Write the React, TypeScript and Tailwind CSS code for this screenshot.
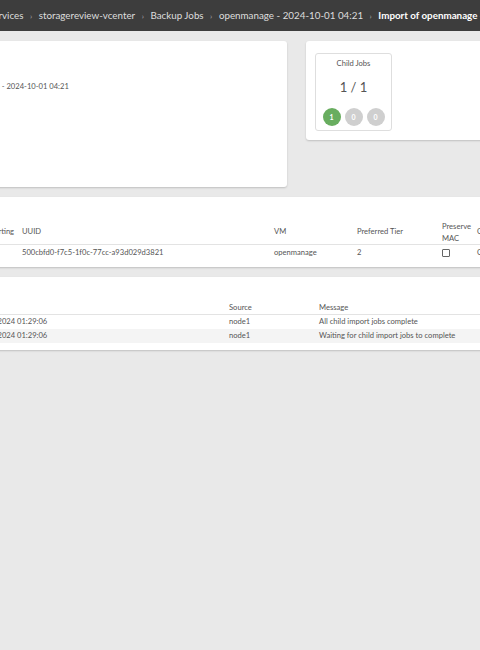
import React from 'react'

const crumbs = ['Services', 'storagereview-vcenter', 'Backup Jobs', 'openmanage - 2024-10-01 04:21']

const events = [
  {time: '10/01/2024 01:29:06', source: 'node1', message: 'All child import jobs complete'},
  {time: '10/01/2024 01:29:06', source: 'node1', message: 'Waiting for child import jobs to complete'},
]

function Badge({n, green}: {n: number; green?: boolean}) {
  return (
    <div className={`w-[18px] h-[18px] rounded-full flex items-center justify-center text-white text-[7px] font-bold ${green ? 'bg-[#68ad5f]' : 'bg-[#cfcfcf]'}`}>
      {n}
    </div>
  )
}

export default function App() {
  return (
    <div className="min-h-[650px] w-[480px] overflow-hidden bg-[#e9e9e9] font-['Lato',sans-serif] text-[#555]">
      {/* breadcrumb bar */}
      <div className="h-[31px] bg-[#3d3d3d] flex items-center whitespace-nowrap text-[9.8px] text-[#dedede]">
        <div className="flex items-center -ml-[12px]">
          {crumbs.map((c) => (
            <React.Fragment key={c}>
              <span>{c}</span>
              <span className="mx-[6.5px] text-[8px] text-[#aaa]">›</span>
            </React.Fragment>
          ))}
          <span className="font-bold text-white">Import of openmanage - 2024-10-01 04:21</span>
        </div>
      </div>

      {/* summary cards */}
      <div className="flex items-start gap-[19px] mt-[10px]">
        <div className="-ml-[200px] w-[487px] h-[146px] shrink-0 bg-white rounded-[3px] shadow-[0_1px_2px_rgba(0,0,0,0.18)] pl-[157px] pt-[40px] text-[7.6px]">
          <div className="whitespace-nowrap">openmanage - 2024-10-01 04:21</div>
        </div>
        <div className="w-[220px] h-[99px] shrink-0 bg-white rounded-[3px] shadow-[0_1px_2px_rgba(0,0,0,0.18)] pl-[9px] pt-[12px]">
          <div className="w-[77px] h-[78px] border border-[#dedede] rounded-[3px] flex flex-col items-center">
            <div className="mt-[4px] text-[7.6px]">Child Jobs</div>
            <div className="mt-[9px] text-[13px] text-[#555]">1 / 1</div>
            <div className="mt-[10px] flex gap-[4px]">
              <Badge n={1} green />
              <Badge n={0} />
              <Badge n={0} />
            </div>
          </div>
        </div>
      </div>

      {/* vm table */}
      <div className="mt-[10px] -ml-[20px] w-[540px] bg-white rounded-[3px] shadow-[0_1px_2px_rgba(0,0,0,0.18)] pt-[23px] pb-[6px] text-[7.6px]">
        <div className="flex items-center h-[25px] border-b border-[#e3e3e3] pl-[8px]">
          <div className="w-[34px]">Starting</div>
          <div className="w-[252px]">UUID</div>
          <div className="w-[83px]">VM</div>
          <div className="w-[85px]">Preferred Tier</div>
          <div className="w-[35px] leading-[12px]">Preserve<br />MAC</div>
          <div>Cluster</div>
        </div>
        <div className="flex items-center h-[16px] pl-[8px]">
          <div className="w-[34px]" />
          <div className="w-[252px]">500cbfd0-f7c5-1f0c-77cc-a93d029d3821</div>
          <div className="w-[83px]">openmanage</div>
          <div className="w-[85px]">2</div>
          <div className="w-[35px]">
            <div className="w-[8px] h-[8px] border border-[#666] rounded-[1px]" />
          </div>
          <div>Cluster1</div>
        </div>
      </div>

      {/* events */}
      <div className="mt-[10px] -ml-[100px] w-[600px] bg-white rounded-[3px] shadow-[0_1px_2px_rgba(0,0,0,0.18)] pt-[24px] pb-[7px] text-[7.6px]">
        <div className="flex items-center h-[14px] border-b border-[#e3e3e3] pl-[73px]">
          <div className="w-[256px]">Time</div>
          <div className="w-[90px]">Source</div>
          <div>Message</div>
        </div>
        {events.map((e, i) => (
          <div key={i} className={`flex items-center h-[14px] pl-[73px] ${i % 2 ? 'bg-[#f4f4f4]' : ''}`}>
            <div className="w-[256px]">{e.time}</div>
            <div className="w-[90px]">{e.source}</div>
            <div>{e.message}</div>
          </div>
        ))}
      </div>
    </div>
  )
}
